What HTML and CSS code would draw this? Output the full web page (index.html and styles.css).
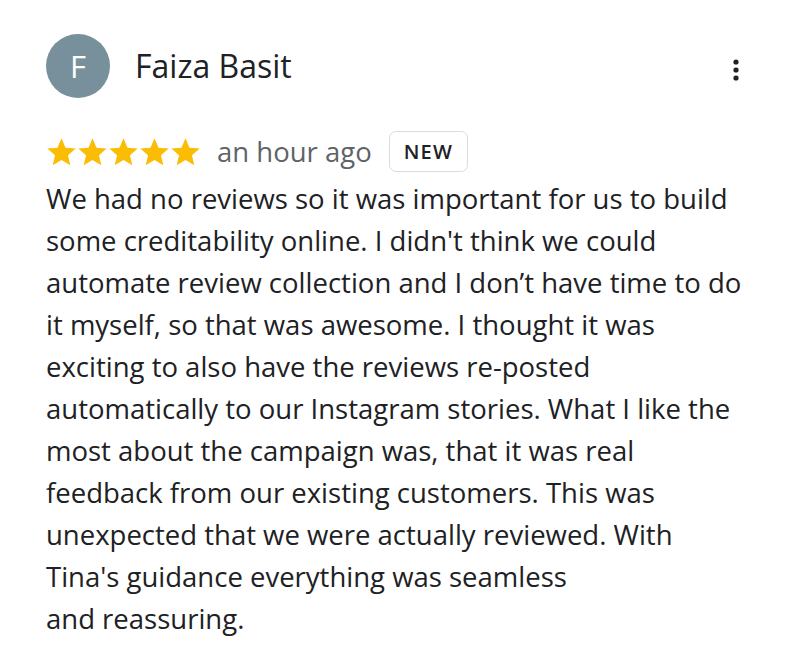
FILE: index.html
```html
<!DOCTYPE html>
<html>
<head>
<meta charset="utf-8">
<link rel="stylesheet" href="styles.css">
</head>
<body>
<div class="review">
  <div class="header">
    <div class="avatar">F</div>
    <div class="name">Faiza Basit</div>
    <div class="menu">
      <svg width="8" height="24" viewBox="0 0 8 24"><circle cx="4" cy="4" r="2.6" fill="#202124"/><circle cx="4" cy="12" r="2.6" fill="#202124"/><circle cx="4" cy="20" r="2.6" fill="#202124"/></svg>
    </div>
  </div>
  <div class="meta">
    <div class="stars">
      <svg class="star" viewBox="0 0 24 24"><path d="M12 1.8l3.1 7.3 7.9.6-6 5.2 1.8 7.7L12 18.5l-6.8 4.1L7 14.9l-6-5.2 7.9-.6z" fill="#fbbc04"/></svg>
      <svg class="star" viewBox="0 0 24 24"><path d="M12 1.8l3.1 7.3 7.9.6-6 5.2 1.8 7.7L12 18.5l-6.8 4.1L7 14.9l-6-5.2 7.9-.6z" fill="#fbbc04"/></svg>
      <svg class="star" viewBox="0 0 24 24"><path d="M12 1.8l3.1 7.3 7.9.6-6 5.2 1.8 7.7L12 18.5l-6.8 4.1L7 14.9l-6-5.2 7.9-.6z" fill="#fbbc04"/></svg>
      <svg class="star" viewBox="0 0 24 24"><path d="M12 1.8l3.1 7.3 7.9.6-6 5.2 1.8 7.7L12 18.5l-6.8 4.1L7 14.9l-6-5.2 7.9-.6z" fill="#fbbc04"/></svg>
      <svg class="star" viewBox="0 0 24 24"><path d="M12 1.8l3.1 7.3 7.9.6-6 5.2 1.8 7.7L12 18.5l-6.8 4.1L7 14.9l-6-5.2 7.9-.6z" fill="#fbbc04"/></svg>
    </div>
    <span class="time">an hour ago</span>
    <span class="badge">NEW</span>
  </div>
  <p class="text">We had no reviews so it was important for us to build<br>some creditability online. I didn't think we could<br>automate review collection and I don’t have time to do<br>it myself, so that was awesome. I thought it was<br>exciting to also have the reviews re-posted<br>automatically to our Instagram stories. What I like the<br>most about the campaign was, that it was real<br>feedback from our existing customers. This was<br>unexpected that we were actually reviewed. With<br>Tina's guidance everything was seamless<br>and reassuring.</p>
</div>
</body>
</html>
```

FILE: styles.css
```css
html, body {
  margin: 0;
  padding: 0;
  background: #fff;
}
body {
  font-family: "Open Sans", Roboto, Arial, sans-serif;
  color: #202124;
}
.review {
  padding: 34px 48px 0 46px;
}
.header {
  display: flex;
  align-items: center;
  height: 64px;
}
.avatar {
  width: 64px;
  height: 64px;
  border-radius: 50%;
  background: #78909c;
  color: #fff;
  font-size: 31px;
  display: flex;
  align-items: center;
  justify-content: center;
  flex: none;
}
.name {
  margin-left: 25px;
  font-size: 32px;
  flex: 1;
  margin-top: -2px;
}
.menu {
  width: 8px;
  height: 24px;
  margin-top: 8px;
  display: flex;
}
.meta {
  display: flex;
  align-items: center;
  margin-top: 32px;
  height: 42px;
}
.stars {
  display: flex;
  gap: 0;
}
.star {
  width: 31px;
  height: 31px;
}
.time {
  margin-left: 16px;
  font-size: 27.5px;
  color: #5f6368;
}
.badge {
  margin-left: 17px;
  border: 1px solid #dadce0;
  border-radius: 7px;
  height: 41px;
  box-sizing: border-box;
  padding: 0 14px;
  display: flex;
  align-items: center;
  font-size: 20px;
  font-weight: 600;
  letter-spacing: 1.2px;
  color: #202124;
}
.text {
  margin: 6px 0 0 0;
  font-size: 27.5px;
  line-height: 42px;
  white-space: nowrap;
  color: #202124;
}
```
